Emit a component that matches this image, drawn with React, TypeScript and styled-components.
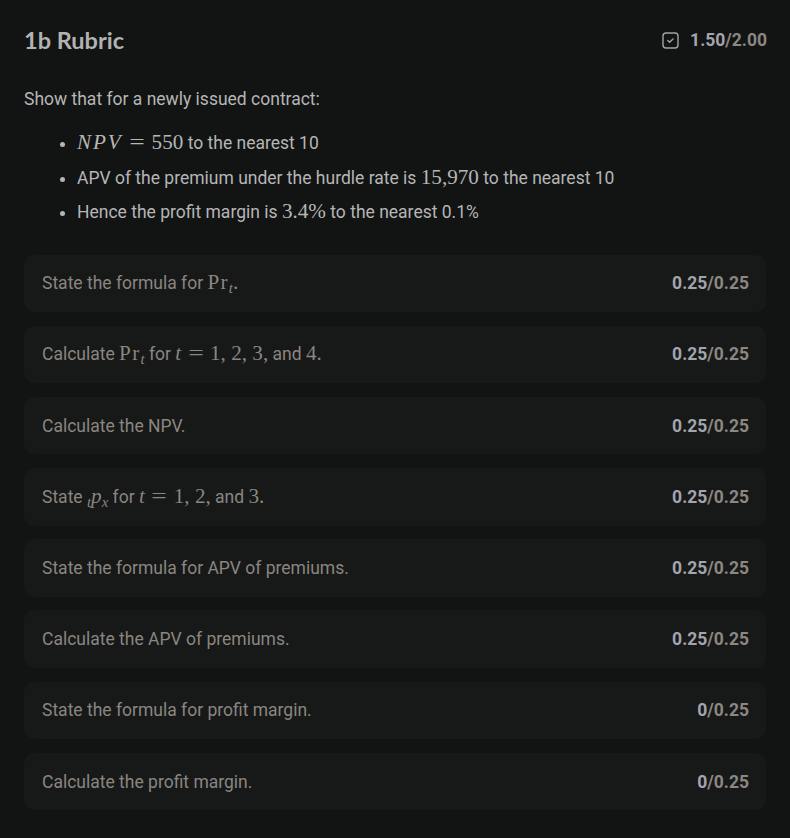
import React from "react";
import styled, { createGlobalStyle } from "styled-components";

const Global = createGlobalStyle`
  html, body { margin: 0; padding: 0; background: #121313; }
  body { font-family: Roboto, "Liberation Sans", sans-serif; }
`;

const Page = styled.div`
  background: #121313;
  min-height: 838px;
  padding: 28px 24px 24px 24px;
  box-sizing: border-box;
  color: #b4b4b4;
`;

const Header = styled.div`
  display: flex;
  align-items: center;
  justify-content: space-between;
  height: 24px;
`;

const Title = styled.h1`
  margin: 0;
  font-family: Lato, "Noto Sans", sans-serif;
  font-weight: 700;
  font-size: 23.5px;
  line-height: 24px;
  color: #b2b2b2;
`;

const TotalScore = styled.div`
  display: flex;
  align-items: center;
  gap: 11px;
  margin-right: -1px;
  font-family: Roboto, sans-serif;
  font-weight: 700;
  font-size: 17.5px;
`;

const Earned = styled.span`
  color: #a2a5ab;
`;

const Possible = styled.span`
  color: #8b8782;
`;

const Description = styled.div`
  margin-top: 35px;
  font-size: 17.5px;
  line-height: 24px;
  color: #b6b6b6;
`;

const BulletList = styled.ul`
  margin: 15px 0 0 0;
  padding-left: 53px;
  font-size: 17.5px;
`;

const Bullet = styled.li`
  height: 34.5px;
  line-height: 34px;
  color: #b6b6b6;
  &::marker { color: #b6b6b6; }
`;

const M = styled.span`
  font-family: "Liberation Serif", "DejaVu Serif", serif;
  font-size: 1.21em;
  white-space: nowrap;
  line-height: 0;
`;

const Mi = styled.i<{ $wide?: boolean }>`
  font-style: italic;
  letter-spacing: ${(p) => (p.$wide ? "0.09em" : "0")};
`;

const Op = styled.span`
  display: inline-block;
  margin: 0 0.4em;
  transform: scaleX(1.3);
`;

const Fn = styled.span`
  letter-spacing: 0.06em;
`;

const Sub = styled.sub`
  font-size: 0.7em;
  font-style: italic;
  vertical-align: -0.25em;
  line-height: 0;
`;

const Cards = styled.div`
  margin-top: 25px;
  display: flex;
  flex-direction: column;
  gap: 13.7px;
`;

const Card = styled.div`
  display: flex;
  align-items: center;
  justify-content: space-between;
  height: 57.5px;
  padding: 0 17px 0 18px;
  box-sizing: border-box;
  border-radius: 10px;
  background: #171818;
`;

const CardText = styled.div`
  font-size: 17.5px;
  color: #8a8680;
`;

const CardScore = styled.div`
  font-weight: 700;
  font-size: 17.5px;
`;

const CheckIcon = () => (
  <svg width="17" height="17" viewBox="0 0 17 17" fill="none">
    <rect x="1" y="1" width="15" height="15" rx="3" stroke="#a3a3a3" strokeWidth="1.4" />
    <path d="M5.8 8.6 L7.6 10.3 L11 6.9" stroke="#a3a3a3" strokeWidth="1.4" strokeLinecap="round" strokeLinejoin="round" />
  </svg>
);

const Pr = () => (
  <>
    <Fn>Pr</Fn>
    <Sub>t</Sub>
  </>
);

const items: { text: React.ReactNode; earned: string }[] = [
  { text: <>State the formula for <M><Pr />.</M></>, earned: "0.25" },
  {
    text: (
      <>
        Calculate <M><Pr /></M> for <M><Mi>t</Mi><Op>=</Op>1, 2, 3,</M> and <M>4.</M>
      </>
    ),
    earned: "0.25",
  },
  { text: <>Calculate the NPV.</>, earned: "0.25" },
  {
    text: (
      <>
        State <M><Sub>t</Sub><Mi>p</Mi><Sub>x</Sub></M> for <M><Mi>t</Mi><Op>=</Op>1, 2,</M> and <M>3.</M>
      </>
    ),
    earned: "0.25",
  },
  { text: <>State the formula for APV of premiums.</>, earned: "0.25" },
  { text: <>Calculate the APV of premiums.</>, earned: "0.25" },
  { text: <>State the formula for profit margin.</>, earned: "0" },
  { text: <>Calculate the profit margin.</>, earned: "0" },
];

export default function App() {
  return (
    <Page>
      <Global />
      <Header>
        <Title>1b Rubric</Title>
        <TotalScore>
          <CheckIcon />
          <span>
            <Earned>1.50</Earned>
            <Possible>/2.00</Possible>
          </span>
        </TotalScore>
      </Header>
      <Description>Show that for a newly issued contract:</Description>
      <BulletList>
        <Bullet>
          <M><Mi $wide>NPV</Mi><Op>=</Op>550</M> to the nearest 10
        </Bullet>
        <Bullet>
          APV of the premium under the hurdle rate is <M>15,970</M> to the nearest 10
        </Bullet>
        <Bullet>
          Hence the profit margin is <M>3.4%</M> to the nearest 0.1%
        </Bullet>
      </BulletList>
      <Cards>
        {items.map((it, i) => (
          <Card key={i}>
            <CardText>{it.text}</CardText>
            <CardScore>
              <Earned>{it.earned}</Earned>
              <Possible>/0.25</Possible>
            </CardScore>
          </Card>
        ))}
      </Cards>
    </Page>
  );
}
